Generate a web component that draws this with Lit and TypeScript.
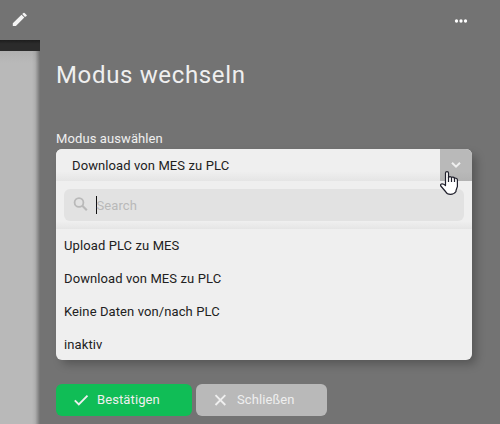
import { LitElement, html, css } from "lit";
import { customElement, state } from "lit/decorators.js";

@customElement("mode-select")
class ModeSelect extends LitElement {
  static styles = css`
    :host { display: block; position: relative; border-radius: 6px; box-shadow: 5px 5px 10px -1px rgba(0, 0, 0, 0.26); }
    .box { border-radius: 6px; overflow: hidden; background: #efefef; color: #212121; }
    .value { display: flex; height: 32px; }
    .current { flex: 1; padding-left: 16px; line-height: 33px; background: linear-gradient(#efefef 70%, #e5e5e5); }
    .toggle { width: 32px; background: linear-gradient(#b9b9b9 70%, #b2b2b2); display: flex; align-items: center; justify-content: center; }
    .search { height: 48px; box-sizing: border-box; padding: 8px; background: linear-gradient(#efefef 84%, #e5e5e5); }
    .field { height: 32px; border-radius: 6px; background: #e2e2e2; display: flex; align-items: center; color: #b9b9b9; }
    .field svg { margin: -2px 0 0 9px; }
    .caret { width: 1px; height: 18px; background: #111; margin: 0 -0.5px 0 7px; }
    .hint { line-height: 33px; }
    .list { height: 131px; overflow: hidden; }
    .option { height: 33px; line-height: 33px; padding-left: 8px; }
    .pointer { position: absolute; left: 384px; top: 22px; }
  `;
  @state() options = ["Upload PLC zu MES", "Download von MES zu PLC", "Keine Daten von/nach PLC", "inaktiv"];
  @state() selected = 1;
  render() {
    return html`<div class="box">
        <div class="value">
          <div class="current">${this.options[this.selected]}</div>
          <div class="toggle">
            <svg width="12" height="8" viewBox="0 0 12 8"><path d="M2 1.7l4 4 4-4" fill="none" stroke="#efefef" stroke-width="2" /></svg>
          </div>
        </div>
        <div class="search">
          <div class="field">
            <svg width="16" height="16" viewBox="0 0 16 16" fill="none" stroke="currentColor">
              <circle cx="6" cy="6.5" r="4.4" stroke-width="1.8" /><path d="M9.3 9.8l4.5 4.5" stroke-width="2.1" />
            </svg>
            <span class="caret"></span><span class="hint">Search</span>
          </div>
        </div>
        <div class="list">${this.options.map((o) => html`<div class="option">${o}</div>`)}</div>
      </div>
      <svg class="pointer" width="19" height="25" viewBox="0 0 19 25">
        <path d="M5.5 14.5V2Q5.5 .6 7 .6T8.5 2V7Q8.5 5.6 10 5.6T11.5 7Q11.5 6 13 6.2T14.4 7.6Q14.5 6.8 16 7.3T17.4 9V15.5L16 19.5V20.5Q14 23.4 10.5 23.4T5.5 20.5L.8 15Q.2 13.6 1.4 13Q3 12.4 5.5 14.5Z" fill="#fff" stroke="#20202c" stroke-width="1.2" stroke-linejoin="round" />
        <path d="M8.5 6V11M11.5 7V11M14.5 7.5V11" stroke="#20202c" stroke-width="1.2" />
      </svg>`;
  }
}

@customElement("app-root")
class AppRoot extends LitElement {
  static styles = css`
    :host { display: flex; width: 500px; height: 424px; overflow: hidden; background: #737373; font: 13px Roboto, sans-serif; letter-spacing: 0.1px; color: #efefef; }
    .behind { width: 40px; display: flex; flex-direction: column; }
    .bar { height: 40px; display: flex; box-sizing: border-box; padding: 12px 0 0 12px; }
    .strip { height: 11px; background: linear-gradient(#1d1d1d, #2b2b2b 35%); }
    .canvas { flex: 1; background: linear-gradient(90deg, transparent 80%, rgba(0, 0, 0, 0.06) 88%, rgba(0, 0, 0, 0.38)), linear-gradient(#b0b0b0, #b9b9b9 12px); }
    .panel { flex: 1; padding: 0 28px 0 16px; }
    .menu { height: 41px; display: flex; justify-content: flex-end; align-items: center; padding-right: 4px; }
    h1 { margin: 16px 0 0; height: 36px; line-height: 36px; font-size: 24px; font-weight: 400; letter-spacing: 0.65px; }
    .label { margin-top: 38px; height: 18px; line-height: 16px; }
    .actions { display: flex; gap: 4px; margin-top: 24px; }
    .button { height: 32px; display: flex; align-items: center; border-radius: 6px; box-sizing: border-box; padding-left: 17px; background: #b9b9b9; width: 131px; }
    .button.confirm { width: 136px; background: #10bd56; padding-left: 18px; }
    .button span { margin-left: 8px; line-height: 32px; }
    .button:not(.confirm) span { margin-left: 9px; }
  `;
  render() {
    return html`<div class="behind">
        <div class="bar">
          <svg width="16" height="16" viewBox="0 0 16 16" fill="#f4f4f4"><path d="M.8 11.3L9.5 2.7l2.8 2.9L3.9 14.1H.8zM10.2 2L11.4.9q.6-.5 1.2 0l2 2q.5.6 0 1.2l-1.6 1z" /></svg>
        </div>
        <div class="strip"></div>
        <div class="canvas"></div>
      </div>
      <div class="panel">
        <div class="menu">
          <svg width="14" height="4" viewBox="0 0 14 4" fill="#fff"><circle cx="2.5" cy="2" r="1.65" /><circle cx="7" cy="2" r="1.65" /><circle cx="11.5" cy="2" r="1.65" /></svg>
        </div>
        <h1>Modus wechseln</h1>
        <div class="label">Modus auswählen</div>
        <mode-select></mode-select>
        <div class="actions">
          <div class="button confirm">
            <svg width="15" height="14" viewBox="0 0 15 14"><path d="M.8 7.4l4 4L13.5 2.6" fill="none" stroke="#efefef" stroke-width="1.9" /></svg>
            <span>Bestätigen</span>
          </div>
          <div class="button">
            <svg width="15" height="14" viewBox="0 0 15 14"><path d="M2.5 2.2l9.8 9.8M12.3 2.2l-9.8 9.8" fill="none" stroke="#efefef" stroke-width="1.9" /></svg>
            <span>Schließen</span>
          </div>
        </div>
      </div>`;
  }
}
